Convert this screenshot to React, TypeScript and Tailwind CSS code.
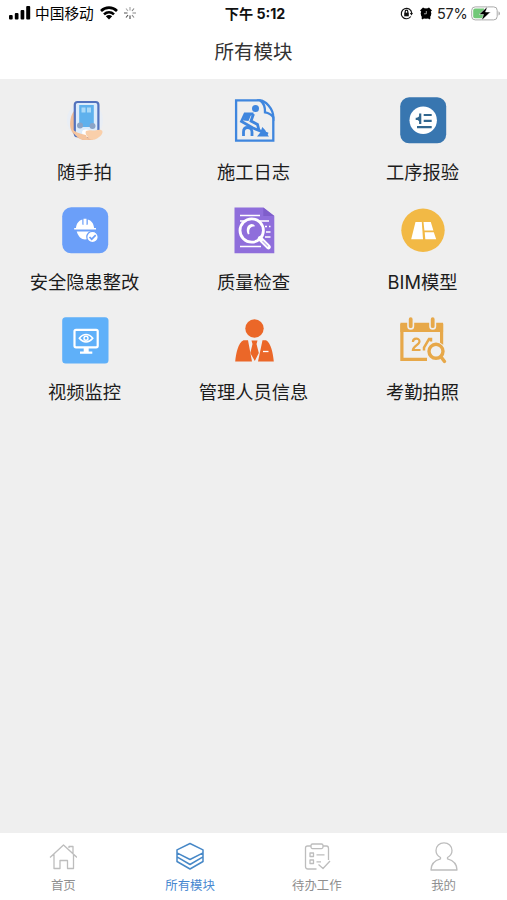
import type { ReactNode } from "react";

interface Module {
  label: string;
  icon: ReactNode;
}

const modules: Module[] = [
  {
    label: "随手拍",
    icon: (
      <>
        <circle cx="23" cy="23" r="18" fill="#e9eef5" />
        <path d="M12 14C8.5 18 7.5 26 8.5 31c1 5 6 10 12 12h10l4-6-22-3z" fill="#f0be9a" />
        <rect x="12.8" y="5" width="23.6" height="34.2" rx="2.8" fill="#dcecfb" stroke="#5272bd" strokeWidth="2.2" />
        <rect x="17.2" y="8" width="14.6" height="22" fill="#5fb1ed" />
        <path d="M19.5 10.5h4v5h-4zM25 10.5h4v5h-4z" fill="#a9d9f8" />
        <circle cx="18" cy="28.5" r="3" fill="#8aa3c6" />
        <circle cx="30.5" cy="29" r="3" fill="#8aa3c6" />
        <path d="M20 35c1-3 5-3 8-1l4 3-3 3h-8z" fill="#fff" />
        <path d="M24 34c3-1.5 6-.5 9-.5 3-1 7-1.5 7.500 1 .2 3-2.500 5-5.500 7-3 2-7 1.500-8.500-.5-1-2-4-4-2.500-7z" fill="#f9cfaa" />
        <path d="M9 31c4 4 9 6 15 7l2 5c-6 .5-14-3-17-12z" fill="#f5c59f" />
      </>
    ),
  },
  {
    label: "施工日志",
    icon: (
      <g fill="none" stroke="#3f86de" strokeWidth="2.3">
        <path d="M29.5 3.3H5.1v40.4h37.2V19.5" />
        <path d="M29 3.3c5 0 13.3 8 13.3 17-2.3-3.5-5.3-4.5-8.3-5 .2-5-1.5-9.500-5-12z" />
        <circle cx="24.5" cy="11.5" r="3.5" fill="#3f86de" stroke="none" />
        <path d="M22.500 17H14l-3.500 7.500L22 31l15 6" strokeWidth="2.800" />
        <path d="M22.500 17L20 24l6.500 3.500 1.500 6" strokeWidth="2.800" />
        <path d="M14 18h6l-2.500 6-5-.5z" fill="#3f86de" stroke="none" />
        <path d="M12.500 39v-4c0-3 1.500-4.500 4-4.500s4.500 2 4.500 4.500v4" strokeWidth="2.800" />
        <path d="M26 39.500l3.300-4 2-5.500 3.200 3.500 1 3 2.500 3z" fill="#3f86de" stroke="none" />
      </g>
    ),
  },
  {
    label: "工序报验",
    icon: (
      <>
        <rect x=".2" y=".3" width="46" height="46" rx="9" fill="#3876b0" />
        <circle cx="23.2" cy="23.3" r="13.7" fill="#fff" />
        <path
          d="M20.2 16.500v10.500M15.700 21.800h4.500M23.700 18h8M23.700 23.800h8M17 30.2h14.700"
          fill="none" stroke="#31678f" strokeWidth="2.2"
        />
        <path d="M16 21.800l4.500-3.500v7z" fill="#31678f" />
      </>
    ),
  },
  {
    label: "安全隐患整改",
    icon: (
      <>
        <rect x=".2" y=".3" width="46" height="46" rx="9" fill="#6b9ff9" />
        <path d="M14 21c.3-4.500 3-7.500 6.300-8.500v5l1.200.5V11.800h3V18l1.300-.5v-5c3.500 1 6 4 6.300 8.500H34v1.600H12.200V21z" fill="#fff" />
        <path d="M14.700 24.500h16.800c-1.700 5-4.800 8-8.500 8s-6.800-3-8.300-8z" fill="#fff" />
        <circle cx="30.500" cy="30" r="5.7" fill="#fff" stroke="#6b9ff9" strokeWidth="1.2" />
        <path d="M27.500 30l2.200 2.200 4-4" fill="none" stroke="#6b9ff9" strokeWidth="1.7" />
      </>
    ),
  },
  {
    label: "质量检查",
    icon: (
      <>
        <path d="M3.500.5h28.800L43.300 9v37.300H3.500z" fill="#8f6edb" />
        <path d="M32.300.5V9h11z" fill="#7f5ecb" />
        <path d="M9 8.500h20M9 14h29M34 19.500h2M38 19.500h1.500M35 25h4.500M34 30h5.500M9 39.500h21" stroke="#fff" strokeWidth="1.7" />
        <circle cx="20.700" cy="23.500" r="11.7" fill="#8f6edb" stroke="#fff" strokeWidth="2.8" />
        <path d="M24 19.200c-4.500 0-6.500 3-5.500 7.500l-1.500.8c-2.500-4.500-1-10 3.500-10.500 1.500 0 3 .8 3.500 2.200z" fill="#fff" />
        <path d="M29 31.500l8.500 8.500" stroke="#fff" strokeWidth="4.6" strokeLinecap="round" />
        <path d="M31.500 34l5.500 5.500" stroke="#c6b4ee" strokeWidth="1.2" />
      </>
    ),
  },
  {
    label: "BIM模型",
    icon: (
      <>
        <circle cx="23" cy="23.3" r="21.7" fill="#f2b945" />
        <path d="M15.500 15h6.300l1.200 17.300H11.200z" fill="#fff" />
        <path d="M23.500 15h7.300l2.600 8.500h-9zM24.700 25.200h9.100l2.400 7.100H25.300z" fill="#fff" />
      </>
    ),
  },
  {
    label: "视频监控",
    icon: (
      <>
        <rect x=".2" y=".3" width="46.300" height="46.300" rx="3.500" fill="#5fb0f9" />
        <rect x="12.500" y="12.800" width="23.200" height="17.500" rx="1.500" fill="none" stroke="#fff" strokeWidth="2.200" />
        <path d="M21.700 30.500h5v4h3.600v2.200H18v-2.200h3.700z" fill="#fff" />
        <path d="M17.300 21.300c4-5 9.500-5 13.500 0-4 4.800-9.500 4.800-13.500 0z" fill="none" stroke="#fff" strokeWidth="1.500" />
        <circle cx="24" cy="21.300" r="2" fill="none" stroke="#fff" strokeWidth="1.400" />
      </>
    ),
  },
  {
    label: "管理人员信息",
    icon: (
      <g fill="#eb6728">
        <circle cx="23.500" cy="11.500" r="9.2" />
        <path d="M12.500 23.300h4.500l4 21.300H4.200C5 37 7 25.500 12.500 23.300zM31.500 23.300h3.500c5 2.500 7 13 7.800 21.300H27z" />
        <path d="M20.500 23.600h6l-1 3.500 2.300 9-4 8-4.500-8 2.200-9z" />
        <path d="M32 34.500h5.500" stroke="#fff" strokeWidth="1.300" />
      </g>
    ),
  },
  {
    label: "考勤拍照",
    icon: (
      <g fill="none" stroke="#e7a849">
        <path d="M27 42.300H1.900V8.500h39.700V28" strokeWidth="3.200" />
        <path d="M.4 5.700h42.700V15H.4z" fill="#e7a849" stroke="none" />
        <path d="M10.700 2.200v7M32.700 2.200v7" stroke="#efefef" strokeWidth="7" strokeLinecap="round" />
        <path d="M10.700 2.200v7M32.700 2.200v7" strokeWidth="3.800" strokeLinecap="round" />
        <path d="M12.900 25c0-4.500 6.600-4.500 6.600-.5 0 3-6.600 5-6.600 8.500h7.600" strokeWidth="2.200" />
        <path d="M31 24.500v-2.500h-2l-5 8.500v3" strokeWidth="2.500" />
        <circle cx="36" cy="34.300" r="9.500" fill="#efefef" stroke="none" />
        <circle cx="36" cy="34.300" r="7" strokeWidth="3.400" />
        <path d="M41.500 40.500l3 4" strokeWidth="3.400" strokeLinecap="round" />
      </g>
    ),
  },
];

const tabs = [
  {
    label: "首页",
    icon: <path d="M1 15.500L14.500 3 28 15.500M5 12.500V26.500h6v-8h7.500v8h6V12.500M20 6V4.500H24v7.300" />,
  },
  {
    label: "所有模块",
    active: true,
    icon: (
      <path
        d="M14 1.500l13 6.300v3L14 17.500 1 10.800v-3zM1 10.800v4L14 22.500l13-7.700v-4M1 14.800v4.700l13 7.500 13-7.500v-4.700"
        strokeWidth="1.500"
      />
    ),
  },
  {
    label: "待办工作",
    icon: (
      <>
        <path d="M8 4H4.500Q2.500 4 2.500 6V24.500Q2.500 27 5 27H13.500M20 4H23.500Q25.500 4 25.500 6.500V18" />
        <rect x="8" y="2" width="12" height="4.600" rx="1.500" />
        <path d="M7 11h3.500v3.500H7zM7 18h3.500v3.500H7zM13.500 12.800H21.500M13.500 19.800H18M15.500 22.500l4.500 4 7-7.500" />
      </>
    ),
  },
  {
    label: "我的",
    icon: (
      <path d="M10.500 15.500C7.500 13.800 6 11 6 8.500c0-4.500 3.500-7.700 8-7.700s8 3.200 8 7.700c0 2.500-1.500 5.300-4.500 7v1.300c5.500 1.500 9.500 5 9.500 11.200H1c0-6.200 4-9.700 9.500-11.200z" />
    ),
  },
];

function StatusBar() {
  return (
    <div className="grid h-[27px] grid-cols-[1fr_auto_1fr] items-center pl-[9px] pr-[6px] text-black">
      <div className="flex items-center">
        <svg width="22" height="14" viewBox="0 0 22 14">
          <rect x="0" y="9" width="3.700" height="4.500" rx="1" />
          <rect x="5.800" y="7" width="3.700" height="6.500" rx="1" />
          <rect x="11.600" y="4" width="3.700" height="9.500" rx="1" />
          <rect x="17.200" y="0" width="4" height="13.500" rx="1" />
        </svg>
        <span className="ml-[4px] pt-px text-[14.7px] leading-none">中国移动</span>
        <svg className="ml-[6px]" width="18" height="14" viewBox="0 0 18 14" fill="none" stroke="#000" strokeWidth="2.6">
          <path d="M1 5C5.500.5 12.500.5 17 5M4 8.400c3-2.800 7-2.800 10 0" />
          <path d="M9 13.500L5.800 10.300c2-1.700 4.400-1.700 6.400 0z" fill="#000" stroke="none" />
        </svg>
        <svg className="ml-[6px]" width="12" height="12" viewBox="0 0 12 12" stroke="#555" strokeWidth="1.2">
          <path d="M6 0v3.500M2 1.500l2 2.500" stroke="#aaa" />
          <path d="M6 8.500V12M0 6h3.500M2 10.500L4 8" />
          <path d="M8.500 6H12M10 1.500L8 4M8 8l2 2.500" stroke="#888" />
        </svg>
      </div>
      <span className="pt-px text-[14.2px] font-bold leading-none text-[#111]">下午 5:12</span>
      <div className="flex items-center justify-end">
        <svg width="13" height="13" viewBox="0 0 13 13" fill="none" stroke="#111" strokeWidth="1.2">
          <path d="M10.800 9.500A5.200 5.200 0 1 1 11.700 6" />
          <path d="M9.800 6h3.200l-1.500 2.500z" fill="#111" stroke="none" />
          <rect x="4.200" y="5.700" width="4.600" height="3.600" fill="#111" stroke="none" />
          <path d="M5.200 6V4.500a1.300 1.300 0 0 1 2.600 0V6" />
        </svg>
        <svg className="ml-[7px]" width="12" height="13" viewBox="0 0 12 13">
          <circle cx="6" cy="6.500" r="5.300" />
          <path d="M0 3.500L3 .5l2 1L1.500 4.800zM12 3.500L9 .5l-2 1 3.500 3.300zM1.200 11l1.500-1.500 1.500 1.500-1.500 1.500zM10.800 11L9.300 9.500 7.800 11l1.500 1.500z" />
          <path d="M6.300 4v2.800H4" fill="none" stroke="#ccc" strokeWidth=".8" />
        </svg>
        <span className="ml-[5px] w-[31px] whitespace-nowrap pt-px text-[14.5px] leading-none tracking-[-0.2px] text-[#222]">57%</span>
        <svg className="ml-[3px]" width="30" height="15" viewBox="0 0 30 15">
          <rect x=".7" y=".9" width="25.500" height="13" rx="3.500" fill="#fff" stroke="#aaa" />
          <path d="M4 2.500h9V12.300H4Q2.200 12.300 2.200 10.500v-6Q2.200 2.500 4 2.500z" fill="#71c878" />
          <path d="M27.500 5.200c2 .8 2 3.500 0 4.300z" fill="#aaa" />
          <path d="M16.500.5L8 8.500h4.500L10.500 14.500l9-8.500h-5z" stroke="#fff" strokeWidth=".5" />
        </svg>
      </div>
    </div>
  );
}

export default function App() {
  return (
    <div className="flex h-screen flex-col overflow-hidden bg-[#efefef] font-['Inter','Noto_Sans_CJK_SC',sans-serif]">
      {/* Header */}
      <header className="h-[79px] shrink-0 bg-white">
        <StatusBar />
        <h1 className="mt-[12px] text-center text-[19.5px] leading-[26px] text-[#333]">所有模块</h1>
      </header>

      {/* Module grid */}
      <main className="grid flex-1 auto-rows-[110px] grid-cols-3 content-start pt-[18px]">
        {modules.map((item) => (
          <button key={item.label} className="flex flex-col items-center">
            <svg className="overflow-visible" width="46" height="46" viewBox="0 0 46 46">
              {item.icon}
            </svg>
            <span className="mt-[16px] whitespace-nowrap text-[18.3px] leading-[26px] text-[#1c1c1c]">{item.label}</span>
          </button>
        ))}
      </main>

      {/* Bottom tabs */}
      <nav className="grid h-[67px] shrink-0 grid-cols-4 bg-white">
        {tabs.map((tab) => (
          <button
            key={tab.label}
            className={`flex flex-col items-center pt-[9px] ${tab.active ? "text-[#4788c7]" : "text-[#bdbdbd]"}`}
          >
            <svg
              width="28" height="29" viewBox="0 0 28 29" fill="none"
              stroke="currentColor" strokeWidth="1.3" strokeLinejoin="round"
            >
              {tab.icon}
            </svg>
            <span className={`mt-[6px] text-[12.4px] leading-[18px] ${tab.active ? "text-[#4788d0]" : "text-[#8f8f8f]"}`}>
              {tab.label}
            </span>
          </button>
        ))}
      </nav>
    </div>
  );
}
